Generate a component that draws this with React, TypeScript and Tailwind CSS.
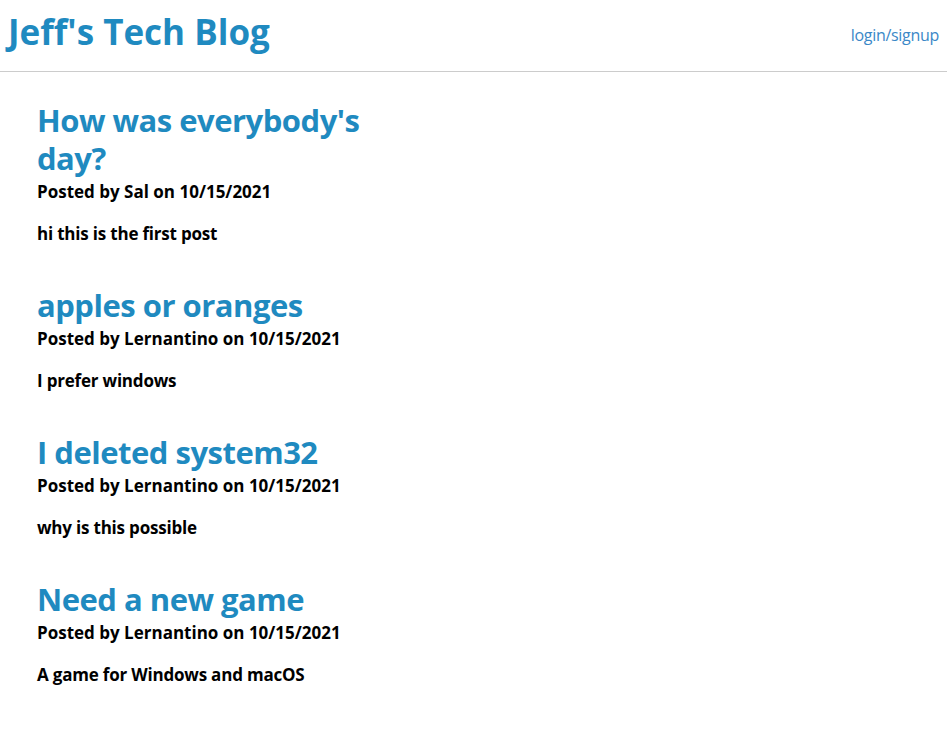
const posts = [
  { title: "How was everybody's day?", author: "Sal", date: "10/15/2021", body: "hi this is the first post" },
  { title: "apples or oranges", author: "Lernantino", date: "10/15/2021", body: "I prefer windows" },
  { title: "I deleted system32", author: "Lernantino", date: "10/15/2021", body: "why is this possible" },
  { title: "Need a new game", author: "Lernantino", date: "10/15/2021", body: "A game for Windows and macOS" },
];

export default function App() {
  return (
    <div className="min-h-screen bg-white font-['Open_Sans',sans-serif] text-black">
      {/* Header */}
      <header className="h-[72px] flex items-center justify-between pl-2 pr-2 border-b border-[#cccccc]">
        <h1 className="pb-[7px] text-[35px] font-bold text-[#1f8ac0]">Jeff's Tech Blog</h1>
        <a href="#" className="pb-[2px] text-[16px] text-[#3b88c7] tracking-[-0.3px]">login/signup</a>
      </header>

      {/* Posts */}
      <main className="pl-[37px] pt-[29px]">
        {posts.map((p) => (
          <article key={p.title} className="w-[360px] mb-[40px]">
            <h2 className="text-[31px] leading-[38px] font-bold text-[#1f8ac0] tracking-[-0.5px]">{p.title}</h2>
            <div className="mt-[3px] text-[17px] leading-[24px] font-bold">
              Posted by {p.author} on {p.date}
            </div>
            <p className="mt-[18px] text-[17px] leading-[24px] font-bold tracking-[-0.2px]">{p.body}</p>
          </article>
        ))}
      </main>
    </div>
  );
}
